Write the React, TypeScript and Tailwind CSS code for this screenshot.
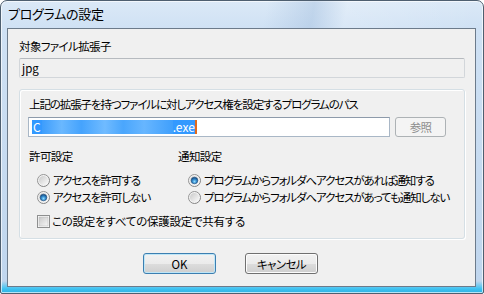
import React from "react";

function Radio({ checked }: { checked?: boolean }) {
  return (
    <svg width="13" height="13" viewBox="0 0 13 13" className="shrink-0">
      <defs>
        <linearGradient id="rbStroke" x1="0" y1="0" x2="1" y2="1">
          <stop offset="0" stopColor="#9d9d9d" />
          <stop offset="1" stopColor="#7a7a7a" />
        </linearGradient>
        <linearGradient id="rbFill" x1="0" y1="0" x2="1" y2="1">
          <stop offset="0" stopColor="#c9c9c9" />
          <stop offset="1" stopColor="#fbfbfb" />
        </linearGradient>
        <radialGradient id="rbDot" cx="0.5" cy="0.65" r="0.6">
          <stop offset="0" stopColor="#8fdcff" />
          <stop offset="0.55" stopColor="#2f86c9" />
          <stop offset="1" stopColor="#1a4f84" />
        </radialGradient>
      </defs>
      <circle cx="6.5" cy="6.5" r="6" fill="#f4f4f4" stroke="url(#rbStroke)" />
      <circle cx="6.5" cy="6.5" r="4.6" fill="url(#rbFill)" />
      {checked && <circle cx="6.5" cy="6.5" r="3.3" fill="url(#rbDot)" stroke="#1d4e7e" strokeWidth="0.6" />}
    </svg>
  );
}

function Checkbox() {
  return (
    <svg width="13" height="13" viewBox="0 0 13 13" className="shrink-0">
      <defs>
        <linearGradient id="cbFill" x1="0" y1="0" x2="1" y2="1">
          <stop offset="0" stopColor="#c8c8c8" />
          <stop offset="1" stopColor="#f7f7f7" />
        </linearGradient>
      </defs>
      <rect x="0.5" y="0.5" width="12" height="12" fill="#fdfdfd" stroke="#8e8f8f" />
      <rect x="2" y="2" width="9" height="9" fill="url(#cbFill)" stroke="#b4b4b4" strokeWidth="0.5" />
    </svg>
  );
}

export default function App() {
  return (
    <div className="w-[484px] h-[294px] font-['Noto_Sans_CJK_JP',sans-serif] [font-feature-settings:'palt'] text-[11.5px] tracking-[-0.6px] leading-[16px] text-black whitespace-nowrap">
      <div className="w-full h-full flex flex-col border border-[#4e5f70] rounded-t-[7px] rounded-b-[2px] bg-[linear-gradient(180deg,#dbe9f7_0px,#cfe1f4_28px,#c4d9ef_200px,#c0d6ee_280px,#3cc2f2_288px,#2aa7d8_294px)] shadow-[inset_0_0_0_1px_rgba(255,255,255,0.65)] pl-[6px] pr-[7px] pb-[6px]">
        <div className="h-[27px] flex items-center pl-[1px] text-[13px] tracking-[-0.3px] bg-[linear-gradient(100deg,rgba(255,255,255,0)_0%,rgba(255,255,255,0)_55%,rgba(150,180,215,0.35)_65%,rgba(255,255,255,0.2)_72%,rgba(255,255,255,0)_100%)]">
          <span className="mt-[-1px]">プログラムの設定</span>
        </div>
        <div className="flex-1 flex flex-col bg-[#f0f0f0] border border-[#6c7b8b] pl-[11px] pr-[10px] pt-[9px]">
          <div>対象ファイル拡張子</div>
          <div className="mt-[4px] h-[20px] rounded-[2px] border border-[#d2d6da] border-t-[#b6babf] bg-[#f0f0f0] flex items-center pl-[2px] tracking-normal">
            jpg
          </div>

          <div className="mt-[11px] h-[150px] rounded-[3px] border border-[#d5dfe5] shadow-[inset_1px_1px_0_#ffffff,1px_1px_0_#ffffff] pl-[8px] pr-[18px] pt-[6px] flex flex-col">
            <div className="pl-[1px] tracking-[-1.1px]">上記の拡張子を持つファイルに対しアクセス権を設定するプログラムのパス</div>
            <div className="mt-[5px] flex gap-[5px]">
              <div className="w-[363px] h-[20px] border border-[#a9b7c6] border-t-[#8d9aaa] bg-white flex items-center pl-[3px] tracking-normal text-[12px]">
                <div className="flex items-center h-[14px] bg-[#3399ff] text-white leading-[14px]">
                  <span className="px-[1px]">C</span>
                  <div className="w-[131px] h-[14px] bg-[linear-gradient(90deg,#3d9dfc,#6ab8ff_15%,#45a3fd_30%,#70bbff_48%,#4aa6fd_62%,#67b6ff_78%,#3f9ffc)]" />
                  <span>.exe</span>
                </div>
                <div className="w-[2px] h-[14px] bg-[#e06a1c]" />
              </div>
              <div className="w-[51px] h-[20px] rounded-[3px] border border-[#adb2b5] bg-[#f4f4f4] text-[#8d8d8d] flex items-center justify-center">
                参照
              </div>
            </div>

            <div className="mt-[11px] flex">
              <div className="w-[150px] shrink-0 flex flex-col">
                <div className="pl-[1px]">許可設定</div>
                <div className="mt-[8px] flex flex-col gap-[1px] pl-[9px] tracking-[-1px]">
                  <div className="flex items-center gap-[3px] h-[16px]">
                    <Radio />
                    <span>アクセスを許可する</span>
                  </div>
                  <div className="flex items-center gap-[3px] h-[16px]">
                    <Radio checked />
                    <span>アクセスを許可しない</span>
                  </div>
                </div>
              </div>
              <div className="flex flex-col shrink-0">
                <div>通知設定</div>
                <div className="mt-[8px] flex flex-col gap-[1px] pl-[10px] tracking-[-1.1px]">
                  <div className="flex items-center gap-[3px] h-[16px]">
                    <Radio checked />
                    <span>プログラムからフォルダへアクセスがあれば通知する</span>
                  </div>
                  <div className="flex items-center gap-[3px] h-[16px]">
                    <Radio />
                    <span>プログラムからフォルダへアクセスがあっても通知しない</span>
                  </div>
                </div>
              </div>
            </div>

            <div className="mt-[8px] pl-[9px] flex items-center gap-[2px] h-[16px] tracking-[-0.25px]">
              <Checkbox />
              <span>この設定をすべての保護設定で共有する</span>
            </div>
          </div>

          <div className="mt-[14px] flex pl-[124px] gap-[29px]">
            <div className="w-[73px] h-[21px] rounded-[3px] border border-[#3c7fb1] bg-[linear-gradient(180deg,#f2f2f2,#ebebeb_50%,#dddddd_50%,#cfcfcf)] shadow-[inset_0_0_0_1px_#bfe6f7] flex items-center justify-center tracking-normal">
              OK
            </div>
            <div className="w-[73px] h-[21px] rounded-[3px] border border-[#707070] bg-[linear-gradient(180deg,#f2f2f2,#ebebeb_50%,#dddddd_50%,#cfcfcf)] shadow-[inset_0_0_0_1px_#fcfcfc] flex items-center justify-center">
              キャンセル
            </div>
          </div>
        </div>
      </div>
    </div>
  );
}
